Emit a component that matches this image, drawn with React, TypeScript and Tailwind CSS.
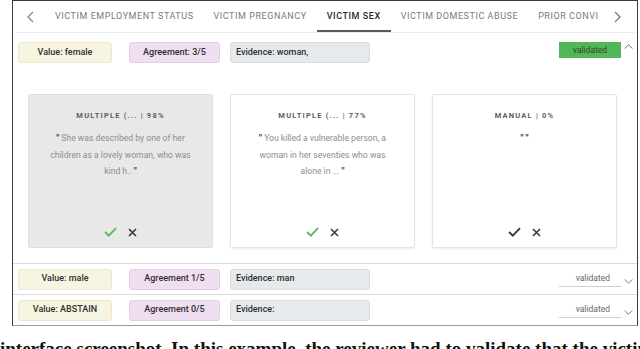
import React from "react";

const Chevron = ({ dir, className }: { dir: "left" | "right" | "up" | "down"; className?: string }) => {
  const d =
    dir === "left"
      ? "M7 1 L2 6 L7 11"
      : dir === "right"
      ? "M2 1 L7 6 L2 11"
      : dir === "up"
      ? "M1 7 L6 2 L11 7"
      : "M1 3 L6 8 L11 3";
  const w = dir === "left" || dir === "right" ? 9 : 12;
  const h = dir === "left" || dir === "right" ? 12 : 10;
  return (
    <svg width={w} height={h} viewBox={`0 0 ${w} ${h}`} className={className} fill="none" stroke="currentColor" strokeWidth="1.3">
      <path d={d} />
    </svg>
  );
};

const Check = ({ color }: { color: string }) => (
  <svg width="13" height="10" viewBox="0 0 13 10" fill="none" stroke={color} strokeWidth="1.9">
    <path d="M1 5 L4.8 8.6 L12 1.2" />
  </svg>
);

const Cross = () => (
  <svg width="9" height="9" viewBox="0 0 9 9" fill="none" stroke="#3a3a3a" strokeWidth="1.6">
    <path d="M1 1 L8 8 M8 1 L1 8" />
  </svg>
);

const Card = ({
  title,
  quote,
  selected,
  checkColor,
}: {
  title: string;
  quote: string;
  selected?: boolean;
  checkColor: string;
}) => (
  <div
    className={`w-[185px] h-[154px] rounded-[2px] border flex flex-col items-center pt-[16px] pb-[10px] px-[18px] ${
      selected ? "bg-[#e8e8e8] border-[#dedede]" : "bg-white border-[#e4e4e4] shadow-[0_1px_2px_rgba(0,0,0,0.08)]"
    }`}
  >
    <div className="text-[7.5px] leading-[10px] font-bold tracking-[0.16em] text-[#5a5f66]">{title}</div>
    <div className="mt-[9px] text-[8.6px] leading-[16.5px] text-[#8a8d92] text-center">
      <span className="font-bold text-[#444] text-[9.5px]">"</span>
      {quote ? " " + quote + " " : " "}
      <span className="font-bold text-[#444] text-[9.5px]">"</span>
    </div>
    <div className="flex-1" />
    <div className="flex items-center gap-[11px]">
      <Check color={checkColor} />
      <Cross />
    </div>
  </div>
);

const Chips = ({ value, agreement, evidence }: { value: string; agreement: string; evidence: string }) => (
  <div className="flex items-center">
    <div className="ml-[5px] w-[94px] h-[21px] rounded-[3px] bg-[#f7f5e1] border border-[#ebe8cf] flex items-center justify-center text-[9px] font-medium text-[#2f2f2f]">
      {value}
    </div>
    <div className="ml-[17px] w-[91px] h-[21px] rounded-[3px] bg-[#efdff0] border border-[#e2cfe4] flex items-center justify-center text-[9px] font-medium text-[#2f2f2f]">
      {agreement}
    </div>
    <div className="ml-[10px] w-[140px] h-[21px] rounded-[3px] bg-[#e7eaec] border border-[#d9dde0] flex items-center pl-[5px] text-[9px] font-medium text-[#2f2f2f]">
      {evidence}
    </div>
  </div>
);

export default function App() {
  const tabs = ["VICTIM EMPLOYMENT STATUS", "VICTIM PREGNANCY", "VICTIM SEX", "VICTIM DOMESTIC ABUSE", "PRIOR CONVICTIONS"];
  return (
    <div className="w-[640px] h-[349px] overflow-hidden bg-white" style={{ fontFamily: "Roboto, 'Liberation Sans', sans-serif" }}>
      <div className="ml-[12px] w-[626px] border-l border-t border-r-[1.5px] border-l-[#3a3a3a] border-t-[#3a3a3a] border-r-[#3a3a3a] border-b border-b-[#9a9a9a]">
        {/* tabs */}
        <div className="h-[32px] flex items-stretch border-b border-[#ececec] mx-[2px]">
          <div className="w-[30px] flex items-center justify-center text-[#8a8a8a]">
            <Chevron dir="left" />
          </div>
          <div className="flex-1 overflow-hidden flex items-stretch">
            {tabs.map((t) => {
              const active = t === "VICTIM SEX";
              return (
                <div
                  key={t}
                  className={`shrink-0 px-[10px] flex items-center text-[9px] tracking-[0.55px] whitespace-nowrap ${
                    active ? "text-[#2b2b2b] font-medium border-b-2 border-[#5a5a5a] pt-[2px]" : "text-[#7a7a7a]"
                  }`}
                >
                  {t}
                </div>
              );
            })}
          </div>
          <div className="w-[36px] flex items-center justify-center text-[#7a7a7a]">
            <Chevron dir="right" />
          </div>
        </div>

        {/* row 1 expanded */}
        <div className="border-b border-[#dcdcdc] pt-[9px] pb-[15px]">
          <div className="flex items-start">
            <Chips value="Value: female" agreement="Agreement: 3/5" evidence="Evidence: woman," />
            <div className="flex-1" />
            <div className="w-[62px] h-[16px] bg-[#52b557] flex items-center justify-center text-[8.5px] text-[#2d4a2e]">
              validated
            </div>
            <div className="w-[16px] flex justify-center pt-[1px] pr-[2px] text-[#666]">
              <Chevron dir="up" className="w-[9px] h-[8px]" />
            </div>
          </div>
          <div className="mt-[31px] ml-[15px] flex gap-[17px]">
            <Card
              title="MULTIPLE (... | 98%"
              quote="She was described by one of her children as a lovely woman, who was kind h.."
              selected
              checkColor="#5cb85c"
            />
            <Card
              title="MULTIPLE (... | 77%"
              quote="You killed a vulnerable person, a woman in her seventies who was alone in ..."
              checkColor="#5cb85c"
            />
            <Card title="MANUAL | 0%" quote="" checkColor="#3a3a3a" />
          </div>
        </div>

        {/* row 2 */}
        <div className="border-b border-[#dcdcdc] h-[31px] flex items-center">
          <Chips value="Value: male" agreement="Agreement 1/5" evidence="Evidence: man" />
          <div className="flex-1" />
          <div className="w-[62px] h-[16px] border-b border-[#cfcfcf] flex items-center justify-end pr-[11px] text-[8.5px] text-[#666]">
            validated
          </div>
          <div className="w-[16px] flex justify-center pt-[4px] pr-[2px] text-[#777]">
            <Chevron dir="down" className="w-[9px] h-[8px]" />
          </div>
        </div>

        {/* row 3 */}
        <div className="h-[30px] flex items-center">
          <Chips value="Value: ABSTAIN" agreement="Agreement 0/5" evidence="Evidence:" />
          <div className="flex-1" />
          <div className="w-[62px] h-[16px] border-b border-[#cfcfcf] flex items-center justify-end pr-[11px] text-[8.5px] text-[#666]">
            validated
          </div>
          <div className="w-[16px] flex justify-center pt-[4px] pr-[2px] text-[#777]">
            <Chevron dir="down" className="w-[9px] h-[8px]" />
          </div>
        </div>
      </div>
      <div
        className="mt-[13px] text-[19px] leading-[20px] font-bold whitespace-nowrap text-[#111]"
        style={{ fontFamily: "'Liberation Serif', serif" }}
      >
        interface screenshot. In this example, the reviewer had to validate that the victim
      </div>
    </div>
  );
}
